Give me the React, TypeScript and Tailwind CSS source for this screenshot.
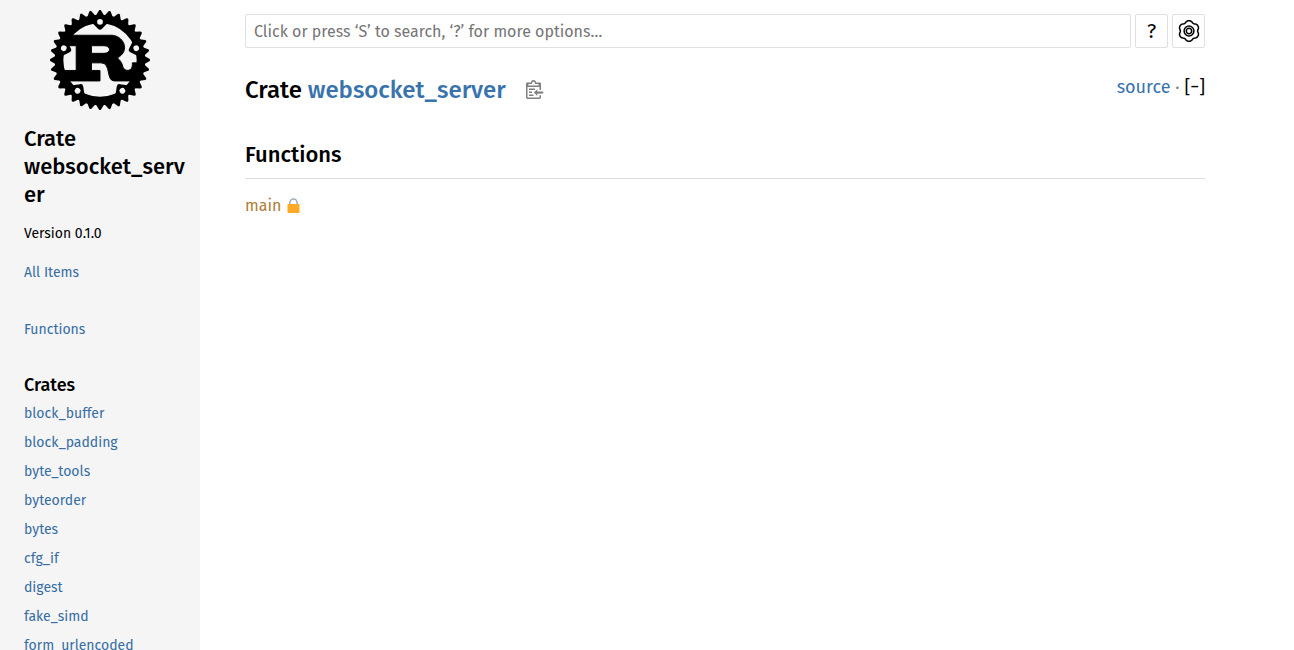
const crates = [
  "block_buffer",
  "block_padding",
  "byte_tools",
  "byteorder",
  "bytes",
  "cfg_if",
  "digest",
  "fake_simd",
  "form_urlencoded",
];

const teeth = Array.from({ length: 32 }, (_, i) => i * 11.25);
const mounts = Array.from({ length: 5 }, (_, i) => i * 72);

function RustLogo() {
  return (
    <svg width="100" height="100" viewBox="0.5 0.5 105 105" aria-hidden="true">
      <mask id="mount-holes">
        <rect width="106" height="106" fill="white" />
        {mounts.map((angle) => (
          <circle key={angle} cx="53" cy="13" r="3" fill="black" transform={`rotate(${angle} 53 53)`} />
        ))}
      </mask>
      <g transform="translate(53 53)" stroke="black" strokeLinejoin="round">
        <path
          d="M-9-15H4C12-15 12-7 4-7H-9ZM-40 22H0V11H-9V3H1C12 3 6 22 15 22H40V3H34V5C34 13 25 12 24 7C23 2 19-2 18-2C33-10 24-26 12-26H-35V-15H-25V11H-40Z"
          strokeWidth="1"
          fillRule="evenodd"
        />
      </g>
      <g mask="url(#mount-holes)">
        <g transform="translate(53 53)" stroke="black" strokeLinejoin="round">
          <circle r="43" fill="none" strokeWidth="9" />
          {teeth.map((angle) => (
            <polygon key={angle} points="46,3 51,0 46,-3" strokeWidth="3" transform={`rotate(${angle})`} />
          ))}
          {mounts.map((angle) => (
            <polygon key={angle} points="-7,-42 0,-35 7,-42" strokeWidth="6" transform={`rotate(${angle})`} />
          ))}
        </g>
      </g>
    </svg>
  );
}

function ClipboardIcon() {
  return (
    <svg width="18" height="19" viewBox="0 0 24 25" fill="currentColor" aria-hidden="true">
      <path d="M18 20h2v3c0 1-1 2-2 2H2c-.998 0-2-1-2-2V5c0-.911.755-1.667 1.667-1.667h5A3.323 3.323 0 0110 0a3.323 3.323 0 013.333 3.333h5C19.245 3.333 20 4.09 20 5v8.333h-2V9H2v14h16v-3zM3 7h14c0-.911-.793-1.667-1.75-1.667H13.5c-.957 0-1.75-.755-1.75-1.666C11.75 2.755 10.957 2 10 2s-1.75.755-1.75 1.667c0 .911-.793 1.666-1.75 1.666H4.75C3.793 5.333 3 6.09 3 7z" />
      <path d="M4 19h6v2H4zM12 11H4v2h8zM4 17h4v-2H4zM15 15v-3l-4.5 4.5L15 21v-3l8.027-.032L23 15z" />
    </svg>
  );
}

// Six-lobed wheel: the radius swells at the top and every 60 degrees from it.
const wheelOutline =
  Array.from({ length: 72 }, (_, i) => {
    const angle = (i * Math.PI) / 36;
    const radius = 9.6 + 0.85 * Math.cos(6 * angle) - 0.15 * Math.cos(12 * angle);
    const x = (radius * Math.sin(angle)).toFixed(2);
    const y = (-radius * Math.cos(angle)).toFixed(2);
    return `${i === 0 ? "M" : "L"}${x} ${y}`;
  }).join("") + "Z";

function WheelIcon() {
  return (
    <svg width="22" height="22" viewBox="-11 -11 22 22" fill="none" stroke="black" strokeWidth="1.5" aria-hidden="true">
      <path d={wheelOutline} strokeLinejoin="round" />
      <circle r="4.9" />
      <circle r="2.7" />
    </svg>
  );
}

function LockIcon() {
  return (
    <svg width="13" height="16" viewBox="0 0 13 16" role="img" aria-label="Restricted Visibility">
      <path d="M2.9 8V4.6a3.6 3.6 0 0 1 7.2 0V8" fill="none" stroke="#9db0bb" strokeWidth="1.6" />
      <rect x="0.5" y="6" width="12" height="9" rx="1.2" fill="#ffa928" />
    </svg>
  );
}

export default function App() {
  return (
    <div className="flex h-screen overflow-hidden bg-white font-['Fira_Sans','Noto_Sans',sans-serif] text-black">
      <nav className="w-[200px] shrink-0 overflow-hidden bg-[#f5f5f5] pl-6 text-[14px] text-[#356da4]">
        <a href="#top" aria-label="Crate home" className="-ml-6 flex justify-center pt-[10px]">
          <RustLogo />
        </a>
        <h2 className="mt-[15px] text-[22px] leading-7 font-medium whitespace-nowrap text-black">
          <a href="#top">
            Crate
            <br />
            websocket_serv
            <br />
            er
          </a>
        </h2>
        <div className="mt-[15px] leading-5 text-black">Version 0.1.0</div>
        <a href="#all" className="mt-[19px] block leading-5">All Items</a>
        <a href="#functions" className="mt-[37px] block leading-5">Functions</a>
        <h3 className="mt-[35px] text-[18px] leading-5 font-medium text-black">Crates</h3>
        <ul className="mt-1">
          {crates.map((name) => (
            <li key={name}>
              <a href={`#${name}`} className="block leading-[29px]">{name}</a>
            </li>
          ))}
        </ul>
      </nav>

      <main className="min-w-0 flex-1 overflow-hidden pt-[14px] pr-4 pl-[45px]">
        <div className="max-w-[960px]">
          <form className="flex gap-1" onSubmit={(event) => event.preventDefault()}>
            <input
              type="search"
              aria-label="Search the documentation"
              placeholder="Click or press ‘S’ to search, ‘?’ for more options…"
              className="h-[34px] min-w-0 flex-1 rounded-[2px] border border-[#e0e0e0] px-2 text-[16px] placeholder:text-[#757575] focus:outline-none"
            />
            <button type="button" aria-label="Help" className="h-[34px] w-[33px] rounded-[2px] border border-[#e0e0e0] text-[20px] leading-8">
              ?
            </button>
            <button type="button" aria-label="Settings" className="flex h-[34px] w-[33px] items-center justify-center rounded-[2px] border border-[#e0e0e0]">
              <WheelIcon />
            </button>
          </form>

          <div className="mt-6 flex items-start justify-between">
            <h1 className="flex items-center text-[24px] leading-9 font-medium">
              <span>
                Crate <a href="#top" className="text-[#3873ad]">websocket_server</a>
              </span>
              <button type="button" aria-label="Copy item path" className="ml-5 pb-[2px] text-[#808080]">
                <ClipboardIcon />
              </button>
            </h1>
            <div className="text-[18px] leading-[30px] text-[#808080]">
              <a href="#source" className="text-[#3873ad]">source</a> ·{" "}
              <button type="button" aria-label="Collapse all" className="text-black">[−]</button>
            </div>
          </div>

          <h2 id="functions" className="mt-8 border-b border-[#ddd] pb-2 text-[22px] leading-[30px] font-medium">
            Functions
          </h2>
          <div className="mt-[15px] flex items-center gap-[6px] text-[16px] leading-6">
            <a href="#main" className="text-[#ad7c37]">main</a>
            <LockIcon />
          </div>
        </div>
      </main>
    </div>
  );
}
